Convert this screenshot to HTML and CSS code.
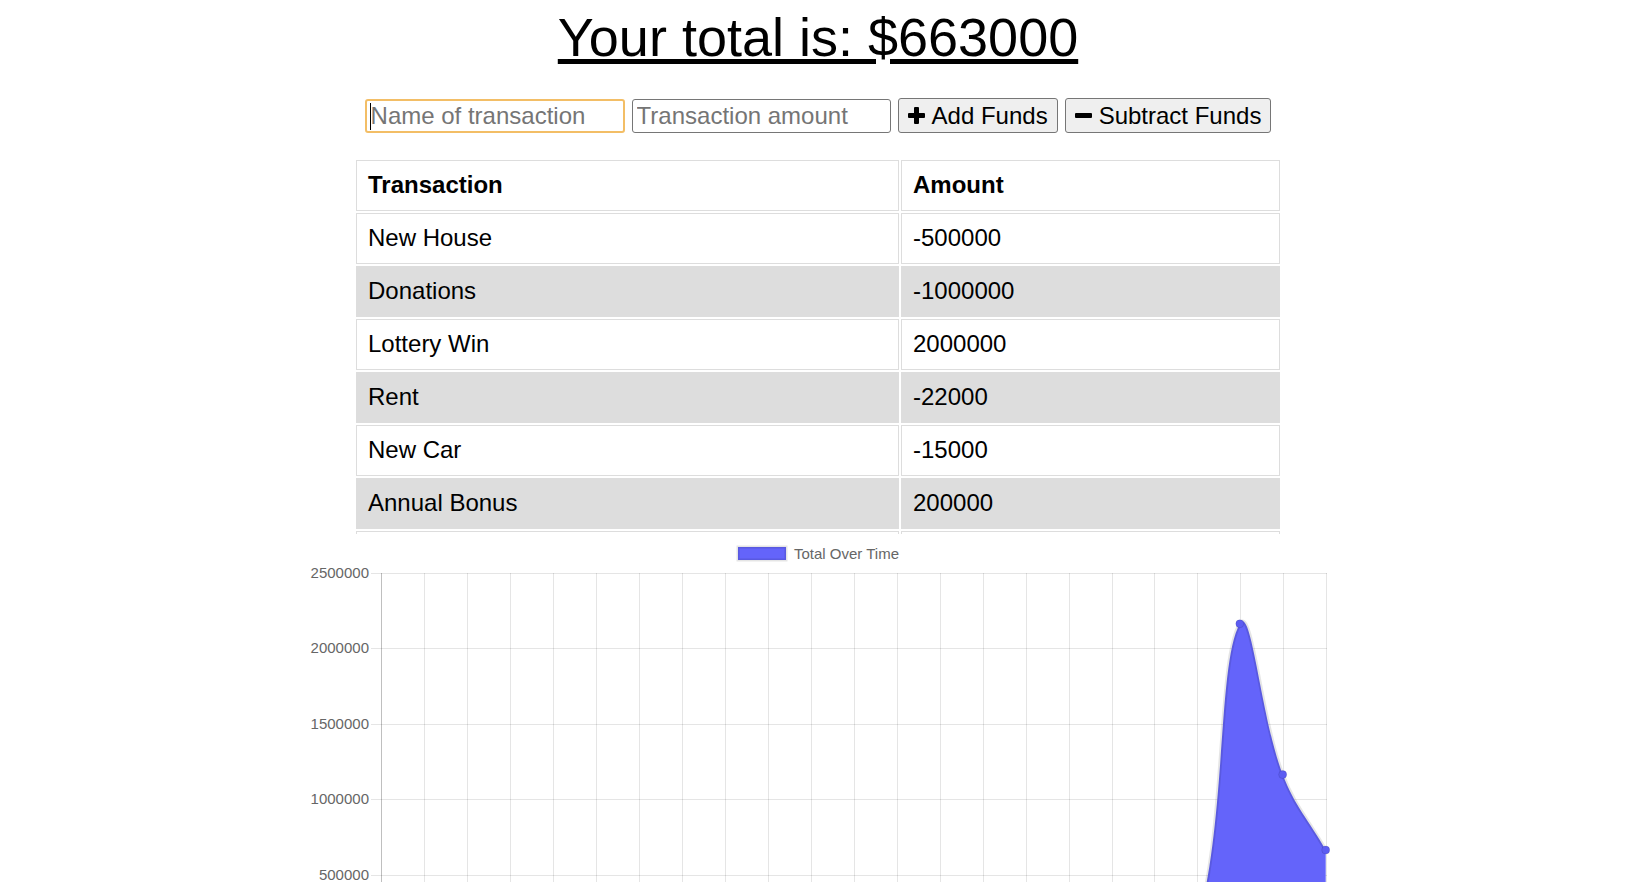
FILE: index.html
```html
<!DOCTYPE html>
<html lang="en">
<head>
<meta charset="utf-8">
<title>Budget Tracker</title>
<link rel="stylesheet" href="styles.css">
</head>
<body>
<main class="app">
  <h1 class="total">Your total is: $663000</h1>

  <div class="controls">
    <span class="field">
      <input class="field-input is-focused" type="text" placeholder="Name of transaction">
      <span class="caret"></span>
    </span>
    <input class="field-input field-amount" type="number" placeholder="Transaction amount">
    <button class="btn" type="button">
      <svg class="btn-icon" viewBox="0 0 17 17" aria-hidden="true"><rect x="6" y="0" width="5" height="17" rx="1"/><rect x="0" y="6" width="17" height="5" rx="1"/></svg>
      <span>Add Funds</span>
    </button>
    <button class="btn" type="button">
      <svg class="btn-icon" viewBox="0 0 17 17" aria-hidden="true"><rect x="0" y="6" width="17" height="5" rx="1"/></svg>
      <span>Subtract Funds</span>
    </button>
  </div>

  <div class="table-wrap">
    <table class="ledger">
      <colgroup><col class="col-name"><col class="col-amount"></colgroup>
      <thead>
        <tr><th>Transaction</th><th>Amount</th></tr>
      </thead>
      <tbody>
        <tr><td>New House</td><td>-500000</td></tr>
        <tr><td>Donations</td><td>-1000000</td></tr>
        <tr><td>Lottery Win</td><td>2000000</td></tr>
        <tr><td>Rent</td><td>-22000</td></tr>
        <tr><td>New Car</td><td>-15000</td></tr>
        <tr><td>Annual Bonus</td><td>200000</td></tr>
        <tr><td>&nbsp;</td><td>&nbsp;</td></tr>
      </tbody>
    </table>
  </div>

  <svg class="chart" viewBox="298 534 1040 430" width="1040" height="430">
    <g class="legend">
      <rect x="738" y="547" width="48" height="13" class="legend-box"/>
      <text x="794" y="553" class="chart-text" dominant-baseline="central">Total Over Time</text>
    </g>
    <g class="grid" shape-rendering="crispEdges">
      <line x1="371" x2="1326.5" y1="573.5" y2="573.5"/>
      <line x1="371" x2="1326.5" y1="648.5" y2="648.5"/>
      <line x1="371" x2="1326.5" y1="724.5" y2="724.5"/>
      <line x1="371" x2="1326.5" y1="799.5" y2="799.5"/>
      <line x1="371" x2="1326.5" y1="875.5" y2="875.5"/>
      <line x1="424.5" x2="424.5" y1="573" y2="960"/>
      <line x1="467.5" x2="467.5" y1="573" y2="960"/>
      <line x1="510.5" x2="510.5" y1="573" y2="960"/>
      <line x1="553.5" x2="553.5" y1="573" y2="960"/>
      <line x1="596.5" x2="596.5" y1="573" y2="960"/>
      <line x1="639.5" x2="639.5" y1="573" y2="960"/>
      <line x1="682.5" x2="682.5" y1="573" y2="960"/>
      <line x1="725.5" x2="725.5" y1="573" y2="960"/>
      <line x1="768.5" x2="768.5" y1="573" y2="960"/>
      <line x1="811.5" x2="811.5" y1="573" y2="960"/>
      <line x1="854.5" x2="854.5" y1="573" y2="960"/>
      <line x1="897.5" x2="897.5" y1="573" y2="960"/>
      <line x1="940.5" x2="940.5" y1="573" y2="960"/>
      <line x1="983.5" x2="983.5" y1="573" y2="960"/>
      <line x1="1026.5" x2="1026.5" y1="573" y2="960"/>
      <line x1="1069.5" x2="1069.5" y1="573" y2="960"/>
      <line x1="1112.5" x2="1112.5" y1="573" y2="960"/>
      <line x1="1154.5" x2="1154.5" y1="573" y2="960"/>
      <line x1="1197.5" x2="1197.5" y1="573" y2="960"/>
      <line x1="1240.5" x2="1240.5" y1="573" y2="960"/>
      <line x1="1283.5" x2="1283.5" y1="573" y2="960"/>
      <line x1="1326.5" x2="1326.5" y1="573" y2="960"/>
    </g>
    <g class="axis" shape-rendering="crispEdges">
      <line x1="381.5" x2="381.5" y1="573" y2="960"/>
      <line x1="371" x2="1326.5" y1="950.5" y2="950.5"/>
    </g>
    <g class="ticks">
      <text x="369" y="572.5" class="chart-text" text-anchor="end" dominant-baseline="central">2500000</text>
      <text x="369" y="647.5" class="chart-text" text-anchor="end" dominant-baseline="central">2000000</text>
      <text x="369" y="723.5" class="chart-text" text-anchor="end" dominant-baseline="central">1500000</text>
      <text x="369" y="798.5" class="chart-text" text-anchor="end" dominant-baseline="central">1000000</text>
      <text x="369" y="874.5" class="chart-text" text-anchor="end" dominant-baseline="central">500000</text>
      <text x="369" y="949.5" class="chart-text" text-anchor="end" dominant-baseline="central">0</text>
    </g>
    <path class="area" d="M381,950 L1068,950 C1086.9,943.4 1092.1,925.9 1111,919.8 C1126.5,914.8 1136.7,921 1153.9,922.1 C1171.1,923.2 1192.6,940.2 1196.9,925.4 C1227,820.9 1217.1,663.6 1239.8,623.8 C1251.5,603.3 1260.6,716.4 1282.7,774.6 C1295,806.8 1308.5,819.8 1325.7,850 L1325.7,950 Z"/>
    <path class="line" d="M381,950 L1068,950 C1086.9,943.4 1092.1,925.9 1111,919.8 C1126.5,914.8 1136.7,921 1153.9,922.1 C1171.1,923.2 1192.6,940.2 1196.9,925.4 C1227,820.9 1217.1,663.6 1239.8,623.8 C1251.5,603.3 1260.6,716.4 1282.7,774.6 C1295,806.8 1308.5,819.8 1325.7,850"/>
    <g class="points">
      <circle cx="1111" cy="919.8" r="4"/>
      <circle cx="1153.9" cy="922.1" r="4"/>
      <circle cx="1196.9" cy="925.4" r="4"/>
      <circle cx="1239.8" cy="623.8" r="4"/>
      <circle cx="1282.7" cy="774.6" r="4"/>
      <circle cx="1325.7" cy="850" r="4"/>
    </g>
  </svg>
</main>
</body>
</html>
```

FILE: styles.css
```css
html, body {
  margin: 0;
  padding: 0;
  background: #ffffff;
}

body {
  font-family: "Liberation Sans", Arial, Helvetica, sans-serif;
  color: #000000;
}

.app {
  display: flex;
  flex-direction: column;
  align-items: center;
  padding-right: 3px;
}

.total {
  margin: 6px 0 0;
  font-size: 54px;
  font-weight: normal;
  line-height: 62px;
  text-decoration: underline;
}

.controls {
  display: flex;
  align-items: flex-end;
  gap: 7px;
  margin-top: 30px;
}

.field {
  position: relative;
  display: block;
}

.field-input {
  box-sizing: border-box;
  display: block;
  width: 260px;
  height: 34px;
  margin: 0;
  padding: 0 4px;
  border: 1px solid #767676;
  border-radius: 3px;
  background: #ffffff;
  color: #000000;
  font-family: "Liberation Sans", Arial, sans-serif;
  font-size: 24px;
  outline: none;
}

.field-amount {
  width: 259px;
  -moz-appearance: textfield;
}

.field-amount::-webkit-outer-spin-button,
.field-amount::-webkit-inner-spin-button {
  -webkit-appearance: none;
  margin: 0;
}

.field-input::placeholder {
  color: #757575;
  opacity: 1;
}

.field-input.is-focused {
  border: 2px solid #f3be66;
}

.caret {
  position: absolute;
  left: 5px;
  top: 4px;
  width: 1px;
  height: 27px;
  background: #000000;
}

.btn {
  box-sizing: border-box;
  display: flex;
  align-items: center;
  gap: 7px;
  height: 35px;
  margin: 0;
  padding: 0 9px;
  border: 1px solid #767676;
  border-radius: 3px;
  background: #efefef;
  color: #000000;
  font-family: "Liberation Sans", Arial, sans-serif;
  font-size: 24px;
}

.btn-icon {
  width: 17px;
  height: 17px;
  flex: none;
  fill: #000000;
}

.table-wrap {
  margin-top: 25px;
  height: 376px;
  overflow: hidden;
}

.ledger {
  width: 928px;
  border-spacing: 2px;
  table-layout: fixed;
  font-size: 24px;
}

.col-name {
  width: 543px;
}

.ledger th,
.ledger td {
  border: 1px solid #dddddd;
  padding: 0 11px 2px;
  line-height: 47px;
  text-align: left;
  white-space: nowrap;
}

.ledger th {
  font-weight: bold;
}

.ledger tbody tr:nth-child(even) td {
  background: #dddddd;
}

.chart {
  display: block;
  flex: none;
}

.chart-text {
  font-family: "Liberation Sans", Arial, Helvetica, sans-serif;
  font-size: 15px;
  fill: #666666;
}

.legend-box {
  fill: #6464fa;
  stroke: rgba(0, 0, 0, 0.1);
  stroke-width: 3;
}

.grid line {
  stroke: rgba(0, 0, 0, 0.1);
  stroke-width: 1;
}

.axis line {
  stroke: rgba(0, 0, 0, 0.25);
  stroke-width: 1;
}

.area {
  fill: #6464fa;
}

.line {
  fill: none;
  stroke: rgba(0, 0, 0, 0.1);
  stroke-width: 3.75;
}

.points circle {
  fill: #5c5cf2;
  stroke: rgba(0, 0, 0, 0.1);
  stroke-width: 1;
}
```
